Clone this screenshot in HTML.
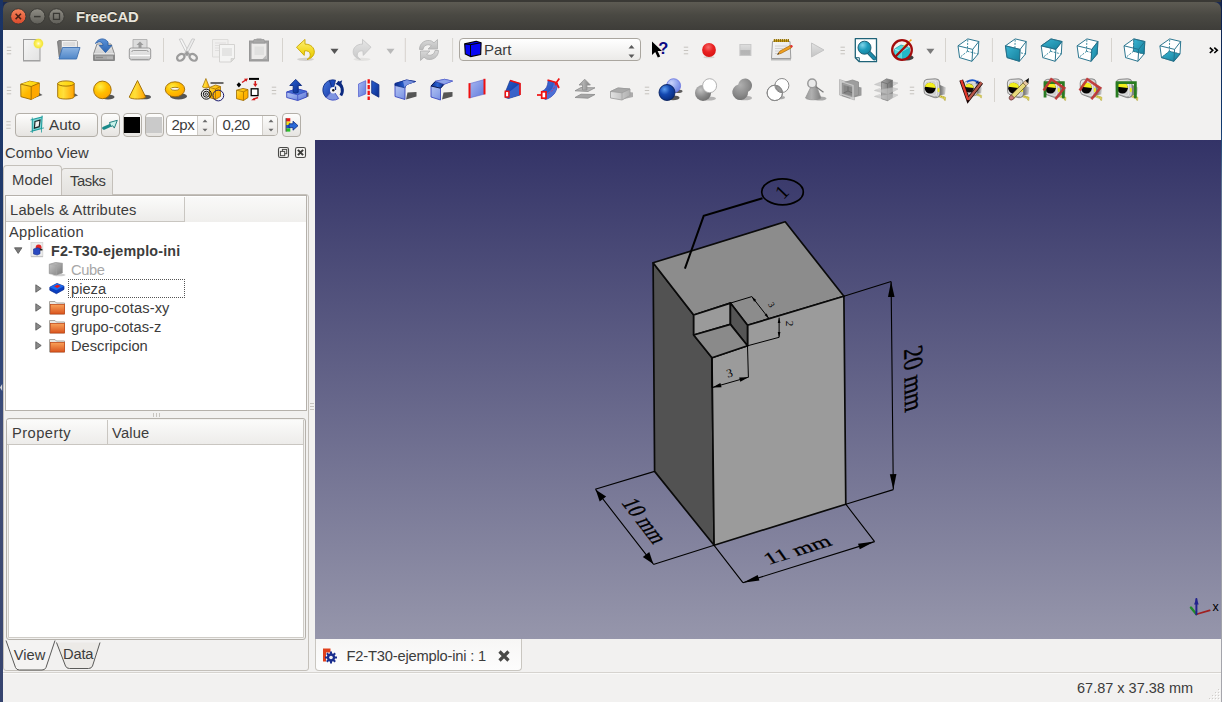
<!DOCTYPE html>
<html lang="en">
<head>
<meta charset="utf-8">
<title>FreeCAD</title>
<style>
html,body{margin:0;padding:0;}
body{width:1222px;height:702px;position:relative;overflow:hidden;background:#f2f1f0;
  font-family:"Liberation Sans","DejaVu Sans",sans-serif;font-size:14.7px;color:#3c3c3c;}
.abs{position:absolute;}
#deskL{left:0;top:0;width:3px;height:702px;background:linear-gradient(#1a3364 0%,#213b6c 30%,#34497a 55%,#444f76 62%,#36446f 100%);}
#deskR{left:1221px;top:0;width:1px;height:702px;background:linear-gradient(#0d1f4a 0%,#0f3a70 18%,#5a7090 26%,#8e96a4 45%,#a6a6ac 100%);}
#deskT{left:0;top:0;width:1222px;height:2px;background:#3a3935;}
#titlebar{left:3px;top:2px;width:1218px;height:28px;border-radius:7px 7px 0 0;
  background:linear-gradient(#5d5b53 0%,#4a4943 45%,#3e3d39 100%);}
#title{left:76px;top:8px;font-weight:bold;font-size:14.8px;color:#e9e5dc;text-shadow:0 -1px 0 rgba(0,0,0,.45);letter-spacing:-0.1px;white-space:nowrap;line-height:18px;}
.t{white-space:nowrap;line-height:18px;}
.frame{border:1px solid #b5b1ab;background:#fff;box-sizing:border-box;}
.hdr{background:linear-gradient(#fbfbfa,#edecea);border-right:1px solid #c9c6c1;border-bottom:1px solid #c9c6c1;box-sizing:border-box;}
.btn{border:1px solid #b3afa8;border-radius:4px;box-sizing:border-box;background:linear-gradient(#fdfdfc,#e6e4e1);}
</style>
</head>
<body>
<div class="abs" id="deskT"></div>
<div class="abs" id="deskL"></div>
<div class="abs" id="deskR"></div>
<svg class="abs" style="left:0;top:383px" width="3" height="9" viewBox="0 0 3 9"><path d="M0 4.500l2.200 -3.500v7z" fill="#d8d8d8"/></svg>
<div class="abs" style="left:3px;top:2px;width:1218px;height:10px;background:#1a2a52;"></div>
<div class="abs" id="titlebar"></div>
<svg class="abs" style="left:3px;top:2px" width="80" height="28" viewBox="0 0 80 28">
  <defs>
    <linearGradient id="gClose" x1="0" y1="0" x2="0" y2="1"><stop offset="0" stop-color="#f5855c"/><stop offset="1" stop-color="#d9482a"/></linearGradient>
    <linearGradient id="gBtn" x1="0" y1="0" x2="0" y2="1"><stop offset="0" stop-color="#8f8d85"/><stop offset="1" stop-color="#5f5e58"/></linearGradient>
  </defs>
  <circle cx="15.3" cy="14.4" r="7.7" fill="url(#gClose)" stroke="#3b3a36" stroke-width="1"/>
  <path d="M12.6 11.7l5.4 5.4M18 11.7l-5.4 5.4" stroke="#4a2216" stroke-width="1.5" fill="none"/>
  <circle cx="34.3" cy="14.4" r="7.7" fill="url(#gBtn)" stroke="#3b3a36" stroke-width="1"/>
  <path d="M31 14.6h6.6" stroke="#3a3935" stroke-width="1.5"/>
  <circle cx="53.5" cy="14.4" r="7.7" fill="url(#gBtn)" stroke="#3b3a36" stroke-width="1"/>
  <rect x="50.5" y="11.4" width="6" height="6" fill="none" stroke="#3a3935" stroke-width="1.3"/>
</svg>
<div class="abs t" id="title">FreeCAD</div>

<!-- TOOLBARS -->
<!--TB_START-->
<svg class="abs" style="left:0;top:30px" width="1222" height="110" viewBox="0 30 1222 110">
<defs><linearGradient id="gPaper" x1="0" y1="0" x2="1" y2="1"><stop offset="0" stop-color="#f6f6f6"/><stop offset="1" stop-color="#e2e2e2"/></linearGradient><radialGradient id="gGlow" cx=".5" cy=".5" r=".5"><stop offset="0" stop-color="#fffce0"/><stop offset=".35" stop-color="#fff36a"/><stop offset=".8" stop-color="#f4e63a"/><stop offset="1" stop-color="#f4e63a" stop-opacity=".3"/></radialGradient><linearGradient id="gFolderBlue" x1="0" y1="0" x2="0" y2="1"><stop offset="0" stop-color="#8db4e2"/><stop offset="1" stop-color="#4f86c8"/></linearGradient><linearGradient id="gDrive" x1="0" y1="0" x2="0" y2="1"><stop offset="0" stop-color="#e9e9e9"/><stop offset="1" stop-color="#bdbdbd"/></linearGradient><linearGradient id="gArrowBlue" x1="0" y1="0" x2="0" y2="1"><stop offset="0" stop-color="#5b92d8"/><stop offset="1" stop-color="#2f66b2"/></linearGradient><linearGradient id="gPrinter" x1="0" y1="0" x2="0" y2="1"><stop offset="0" stop-color="#ececec"/><stop offset="1" stop-color="#cfcfcf"/></linearGradient><linearGradient id="gUndo" x1="0" y1="0" x2="0" y2="1"><stop offset="0" stop-color="#fdf07a"/><stop offset="0.6" stop-color="#f2d820"/><stop offset="1" stop-color="#e2c400"/></linearGradient><linearGradient id="gRedo" x1="0" y1="0" x2="0" y2="1"><stop offset="0" stop-color="#e6e6e6"/><stop offset="1" stop-color="#c8c8c8"/></linearGradient><linearGradient id="gRefresh" x1="0" y1="0" x2="0" y2="1"><stop offset="0" stop-color="#d9d9d9"/><stop offset="1" stop-color="#bcbcbc"/></linearGradient><radialGradient id="gRed" cx="0.45" cy="0.3" r="0.7"><stop offset="0" stop-color="#f46a6a"/><stop offset="0.5" stop-color="#ea2222"/><stop offset="1" stop-color="#d81414"/></radialGradient><linearGradient id="gStop" x1="0" y1="0" x2="0" y2="1"><stop offset="0" stop-color="#dedede"/><stop offset="0.5" stop-color="#cfcfcf"/><stop offset="0.55" stop-color="#b4b4b4"/><stop offset="1" stop-color="#b8b8b8"/></linearGradient><linearGradient id="gPlay" x1="0" y1="0" x2="0" y2="1"><stop offset="0" stop-color="#e2e2e2"/><stop offset="1" stop-color="#c4c4c4"/></linearGradient><radialGradient id="gTealBall" cx="0.35" cy="0.3" r="0.8"><stop offset="0" stop-color="#7fd4ea"/><stop offset="0.5" stop-color="#1f9cbc"/><stop offset="1" stop-color="#15809c"/></radialGradient><linearGradient id="gTeal" x1="0" y1="0" x2="1" y2="1"><stop offset="0" stop-color="#3ab4d2"/><stop offset="1" stop-color="#15809c"/></linearGradient><linearGradient id="gYel" x1="0" y1="0" x2="1" y2="1"><stop offset="0" stop-color="#ffe14a"/><stop offset="0.5" stop-color="#ffb800"/><stop offset="1" stop-color="#ffa200"/></linearGradient><linearGradient id="gYelTop" x1="0" y1="0" x2="1" y2="0"><stop offset="0" stop-color="#ffe53a"/><stop offset="1" stop-color="#ffd000"/></linearGradient><linearGradient id="gYelH" x1="0" y1="0" x2="1" y2="0"><stop offset="0" stop-color="#ffd21a"/><stop offset="0.35" stop-color="#ffdf3a"/><stop offset="1" stop-color="#ffa000"/></linearGradient><radialGradient id="gYelBall" cx="0.38" cy="0.32" r="0.75"><stop offset="0" stop-color="#ffee44"/><stop offset="0.5" stop-color="#ffc000"/><stop offset="1" stop-color="#ffa200"/></radialGradient><linearGradient id="gBlueBox" x1="0" y1="0" x2="1" y2="1"><stop offset="0" stop-color="#c4d0f6"/><stop offset="0.5" stop-color="#90a6ea"/><stop offset="1" stop-color="#5570d4"/></linearGradient><linearGradient id="gBlueDark" x1="0" y1="0" x2="1" y2="1"><stop offset="0" stop-color="#2a62d0"/><stop offset="1" stop-color="#0a2a8c"/></linearGradient><linearGradient id="gBlueDarkH" x1="0" y1="0" x2="1" y2="0"><stop offset="0" stop-color="#0a2a8c"/><stop offset="0.5" stop-color="#2a62d0"/><stop offset="1" stop-color="#0a2a8c"/></linearGradient><linearGradient id="gBlueMid" x1="0" y1="0" x2="1" y2="1"><stop offset="0" stop-color="#4a7ae0"/><stop offset="1" stop-color="#1438a4"/></linearGradient><linearGradient id="gBlueLight" x1="0" y1="0" x2="1" y2="1"><stop offset="0" stop-color="#a9b8f0"/><stop offset="1" stop-color="#5f7add"/></linearGradient><linearGradient id="gGrayH" x1="0" y1="0" x2="1" y2="0"><stop offset="0" stop-color="#9c9c9c"/><stop offset="0.4" stop-color="#b0b0b0"/><stop offset="1" stop-color="#7e7e7e"/></linearGradient><linearGradient id="gGrayBox" x1="0" y1="0" x2="1" y2="0"><stop offset="0" stop-color="#e2e2e2"/><stop offset="1" stop-color="#b0b0b0"/></linearGradient><linearGradient id="gGrayBox2" x1="0" y1="0" x2="1" y2="0"><stop offset="0" stop-color="#a9a9a9"/><stop offset="1" stop-color="#6e6e6e"/></linearGradient><radialGradient id="gBallLB" cx="0.35" cy="0.3" r="0.75"><stop offset="0" stop-color="#c9d4fa"/><stop offset="0.6" stop-color="#8ea2ee"/><stop offset="1" stop-color="#6f86e4"/></radialGradient><radialGradient id="gBallDB" cx="0.35" cy="0.3" r="0.75"><stop offset="0" stop-color="#5b9cf0"/><stop offset="0.45" stop-color="#1448b0"/><stop offset="1" stop-color="#062a7c"/></radialGradient><radialGradient id="gBallG" cx="0.35" cy="0.3" r="0.75"><stop offset="0" stop-color="#c4c4c4"/><stop offset="0.6" stop-color="#8a8a8a"/><stop offset="1" stop-color="#6e6e6e"/></radialGradient><radialGradient id="gBallG2" cx="0.4" cy="0.3" r="0.8"><stop offset="0" stop-color="#b0b0b0"/><stop offset="0.6" stop-color="#8a8a8a"/><stop offset="1" stop-color="#6a6a6a"/></radialGradient><linearGradient id="gTape" x1="0" y1="0" x2="1" y2="1"><stop offset="0" stop-color="#ececec"/><stop offset="0.5" stop-color="#c8c8c8"/><stop offset="1" stop-color="#a4a4a4"/></linearGradient><linearGradient id="gTapeSh" x1="0" y1="0" x2="1" y2="0"><stop offset="0" stop-color="#4a4a4a"/><stop offset="0.6" stop-color="#9a9a9a"/><stop offset="1" stop-color="#dcdcdc"/></linearGradient><linearGradient id="gBtn2" x1="0" y1="0" x2="0" y2="1"><stop offset="0" stop-color="#fdfdfc"/><stop offset="1" stop-color="#e4e2df"/></linearGradient></defs>
<path d="M6.8 47.2h4.400M6.8 50.5h4.400M6.8 53.8h4.400" stroke="#c6c3be" stroke-width="1"/>
<path d="M683.8 47.2h4.400M683.8 50.5h4.400M683.8 53.8h4.400" stroke="#c6c3be" stroke-width="1"/>
<path d="M840.5 47.2h4.400M840.5 50.5h4.400M840.5 53.8h4.400" stroke="#c6c3be" stroke-width="1"/>
<path d="M163.5 38.0v24" stroke="#d6d3ce" stroke-width="1"/>
<path d="M282.5 38.0v24" stroke="#d6d3ce" stroke-width="1"/>
<path d="M405.3 38.0v24" stroke="#d6d3ce" stroke-width="1"/>
<path d="M452.6 38.0v24" stroke="#d6d3ce" stroke-width="1"/>
<path d="M945.5 38.0v24" stroke="#d6d3ce" stroke-width="1"/>
<path d="M992.4 38.0v24" stroke="#d6d3ce" stroke-width="1"/>
<path d="M1111.5 38.0v24" stroke="#d6d3ce" stroke-width="1"/>
<path d="M330.5 48.7h8l-4 5.200z" fill="#555"/>
<path d="M386.5 48.7h8l-4 5.200z" fill="#b9b9b9"/>
<path d="M926.4 48.7h8l-4 5.200z" fill="#7a7a7a"/>
<g transform="translate(20.0,38.0)"><rect x="3.5" y="1.500" width="16.500" height="21" fill="url(#gPaper)" stroke="#9b9b9b" stroke-width="1"/><path d="M3 23.300h17.500" stroke="#bdbdbd" stroke-width="1"/><circle cx="18.400" cy="5.500" r="5.200" fill="url(#gGlow)"/></g>
<g transform="translate(56.0,38.0)"><path d="M1.500 3.500l1.500 -1h5l1.200 1.500h10v15h-16z" fill="#8d8d8d" stroke="#6e6e6e" stroke-width=".8"/><path d="M5.500 2.500h15l1 1v10h-16z" fill="url(#gPaper)" stroke="#9a9a9a" stroke-width=".8"/><path d="M7 5h12M7 7h12" stroke="#c4c4c4" stroke-width=".8"/><path d="M6.500 9.500h17.500l-3.500 11.500h-17.500z" fill="url(#gFolderBlue)" stroke="#3d6fb0" stroke-width=".9"/></g>
<g transform="translate(92.0,38.0)"><path d="M1.500 16l3.500 -10h14l3.500 10v6.500h-21z" fill="url(#gDrive)" stroke="#8a8a8a" stroke-width="1"/><path d="M1.500 16h21" stroke="#f7f7f7" stroke-width="1"/><rect x="2.500" y="17" width="19" height="5" fill="#a9a9a9" stroke="#7e7e7e" stroke-width=".8"/><path d="M4 19.500h7" stroke="#8a8a8a" stroke-width="1.200"/><path d="M16 18.500v2.500M18 18.500v2.500M20 18.500v2.500" stroke="#c4c4c4" stroke-width=".8"/><path d="M3.500 5.500c2 -5 9 -6.500 12.500 -1.500l0 3.500h3.800l-6.300 7l-6.300 -7h3.800c0 -3.500 -4 -5 -7.500 -2z" fill="url(#gArrowBlue)" stroke="#2f62a8" stroke-width=".9"/></g>
<g transform="translate(128.0,38.0)"><path d="M5 1.500h14v9.500h-14z" fill="#dcdcdc" stroke="#b0b0b0" stroke-width=".9"/><path d="M12 3.500l3.500 3.500h-2v3h-3v-3h-2z" fill="#9a9a9a"/><path d="M1.300 12q0 -2 2 -2h17.400q2 0 2 2v7.500q0 2 -2 2h-17.400q-2 0 -2 -2z" fill="url(#gPrinter)" stroke="#9a9a9a" stroke-width="1"/><path d="M3.800 14q0 -1.500 1.500 -1.500h13.400q1.500 0 1.500 1.500" fill="none" stroke="#9f9f9f" stroke-width="1"/><path d="M2 17.500h20" stroke="#fbfbfb" stroke-width="1.300"/><path d="M2.500 22.400h19" stroke="#c9c9c9" stroke-width="1"/></g>
<g transform="translate(175.0,38.0)"><path d="M4.300 1.200l2.600 -.3l8.300 16l-2.300 1.300z" fill="#f6f6f6" stroke="#c2c2c2" stroke-width=".8"/><path d="M19.700 1.200l-2.600 -.3l-8.300 16l2.300 1.300z" fill="#ececec" stroke="#c2c2c2" stroke-width=".8"/><ellipse cx="5.800" cy="19.300" rx="4" ry="3" transform="rotate(-35 5.800 19.300)" fill="none" stroke="#9c9c9c" stroke-width="2.300"/><ellipse cx="18.200" cy="19.300" rx="4" ry="3" transform="rotate(35 18.200 19.300)" fill="none" stroke="#9c9c9c" stroke-width="2.300"/><path d="M9.500 16l2.500 -3.500l2.500 3.500l-2.500 2z" fill="#9c9c9c"/></g>
<g transform="translate(211.0,38.0)"><path d="M1.500 1.500h15.500v17.500h-15.500z" fill="#f0efee" stroke="#dddcda" stroke-width="1"/><path d="M4 5h11M4 7.500h11M4 10h11M4 12.500h11" stroke="#dedddb" stroke-width=".9"/><path d="M8.500 6.500h15v14l-3.500 3.500h-11.500z" fill="#f4f4f3" stroke="#d4d3d1" stroke-width="1"/><rect x="11" y="10" width="10" height="8" fill="#e4e4e3"/><path d="M23.500 20.500h-3.500v3.500z" fill="#dcdbd9" stroke="#cfcecc" stroke-width=".7"/></g>
<g transform="translate(247.0,38.0)"><rect x="2.500" y="3" width="19" height="20" fill="#a2a2a2" stroke="#979797" stroke-width="1"/><path d="M4.500 5.500h15v15.500h-15z" fill="#ecebea"/><path d="M7 1.500h10l1 3.500h-12z" fill="#a8a8a8" stroke="#9a9a9a" stroke-width=".8"/><rect x="9.500" y="0.500" width="5" height="2" fill="#a0a0a0"/><path d="M7.500 8.500h9.500v8.500h-9.500z" fill="#e0e0df"/><path d="M19.500 17v4h-4z" fill="#b9b9b9"/></g>
<g transform="translate(293.0,38.0)"><ellipse cx="12.500" cy="21.300" rx="8.500" ry="1.600" fill="#b9b7b2" opacity=".55"/><path d="M3.500 9.200l8.500 -7.800l0 4.700c6 0 9.600 3.800 9.300 8.300c-.3 3.500 -3.300 6.200 -7.300 7.100c2.600 -1.700 3.600 -3.600 3.200 -5.600c-.5 -2.300 -2.700 -3.300 -5.600 -3.100l-.4 4.600z" fill="url(#gUndo)" stroke="#c9a600" stroke-width=".9" stroke-linejoin="round"/></g>
<g transform="translate(350.5,38.0)"><ellipse cx="11.500" cy="21.300" rx="8.500" ry="1.600" fill="#d9d8d5" opacity=".6"/><path d="M20.500 9.200l-8.500 -7.800l0 4.700c-6 0 -9.600 3.800 -9.300 8.300c.3 3.500 3.300 6.200 7.300 7.100c-2.600 -1.700 -3.600 -3.600 -3.200 -5.600c.5 -2.300 2.700 -3.300 5.600 -3.100l.4 4.600z" fill="url(#gRedo)" stroke="#c6c6c6" stroke-width=".9" stroke-linejoin="round"/></g>
<g transform="translate(417.0,38.0)"><path d="M2.500 11.500c0 -6.500 6 -10.500 12 -8.500l2.500 1.800l3.500 -3.300l0 9.500l-9.500 0l3.500 -3.300c-3.500 -2.200 -8 -.5 -8.500 3.800z" fill="url(#gRefresh)" stroke="#b4b4b4" stroke-width=".9" stroke-linejoin="round"/><path d="M21.500 12.500c0 6.500 -6 10.500 -12 8.500l-2.500 -1.800l-3.500 3.300l0 -9.500l9.500 0l-3.500 3.300c3.500 2.200 8 .5 8.500 -3.800z" fill="url(#gRefresh)" stroke="#b4b4b4" stroke-width=".9" stroke-linejoin="round"/></g>
<g transform="translate(648.0,38.0)"><path d="M4 3.500l0 13.500l3.200 -3l2.600 5.600l2.400 -1.100l-2.600 -5.400l4.400 -.2z" fill="#000"/><text x="10.300" y="16.300" font-family="'Liberation Sans',sans-serif" font-weight="bold" font-size="16.500" fill="#0b0b86">?</text></g>
<g transform="translate(697.0,38.0)"><ellipse cx="12" cy="19.200" rx="5.500" ry="1" fill="#c9c6c1" opacity=".7"/><circle cx="12" cy="12" r="6.900" fill="url(#gRed)"/></g>
<g transform="translate(733.4,38.0)"><rect x="6.500" y="6.500" width="11" height="11" fill="url(#gStop)" stroke="#c9c9c9" stroke-width="1"/></g>
<g transform="translate(769.0,38.0)"><path d="M2 21.500h20" stroke="#bcbcbc" stroke-width="2"/><path d="M3.500 3.500h17.500l.8 17h-19.300z" fill="url(#gPaper)" stroke="#9d9d9d" stroke-width="1"/><path d="M6 8h12M6 10.500h8M6 13h9M6 15.500h6" stroke="#cdcdcd" stroke-width=".9"/><path d="M4.500 1.500h15.500v2.500h-15.500z" fill="#c49a1a"/><path d="M5.500 1v3M7.500 1v3M9.500 1v3M11.500 1v3M13.500 1v3M15.500 1v3M17.500 1v3M19.500 1v3" stroke="#8a6a08" stroke-width=".9"/><path d="M8.500 16.500l3.800 -1.200l10 -5.400l-1.300 -2.300l-10 5.400z" fill="#f0a020" stroke="#a86a10" stroke-width=".7"/><path d="M21 7.600l1.300 2.300l1.200 -.8q.5 -.4 .2 -1l-.6 -.9q-.4 -.5 -1 -.2z" fill="#e03030"/><path d="M8.500 16.500l1.600 -.5l-.8 -1.500z" fill="#333"/></g>
<g transform="translate(805.0,38.0)"><path d="M6.500 5l12.500 7l-12.500 7z" fill="url(#gPlay)" stroke="#c4c4c4" stroke-width="1" stroke-linejoin="round"/></g>
<g transform="translate(853.8,38.0)"><path d="M1.500 .700h21.200v23h-17.200l-4 -4z" fill="#fff" stroke="#1f6378" stroke-width="1.300" stroke-linejoin="round"/><path d="M1.500 19.700h4v4" fill="none" stroke="#1f6378" stroke-width="1"/><path d="M14 13.500l6.500 6.800" stroke="#1f6378" stroke-width="4.200" stroke-linecap="round"/><path d="M14 13.500l6.500 6.800" stroke="#1c8aa9" stroke-width="2.600" stroke-linecap="round"/><circle cx="10.700" cy="9.700" r="6.500" fill="url(#gTealBall)" stroke="#1f6378" stroke-width="1"/></g>
<g transform="translate(890.0,38.0)"><ellipse cx="17" cy="19.500" rx="6.500" ry="3" fill="#222" opacity=".85"/><path d="M4.500 11l6.500 -4l8.500 2.500v9l-8 4l-7 -4z" fill="#4fd8de" stroke="#1d98a8" stroke-width=".7"/><path d="M4.500 11l7 3l8 -4.500M11.500 14v8.500" fill="none" stroke="#bff4f6" stroke-width=".8"/><path d="M11.500 14l8 -4.500v9l-8 4z" fill="#22b8c8"/><path d="M13 9.500l7.500 -7" stroke="#f0d020" stroke-width="1.500"/><circle cx="20.800" cy="2.200" r=".9" fill="#f39a1a"/><circle cx="12" cy="12" r="9.800" fill="none" stroke="#a30c0c" stroke-width="2.300"/><path d="M5 19l14 -14" stroke="#a30c0c" stroke-width="2.300"/></g>
<g transform="translate(956.5,38.0)"><polygon points="1.5,7.8 11.3,0.9 22.3,3.5 21.6,16.0 15.5,23.3 3.1,19.6" fill="#fff"/><path d="M10.9 13.3L11.3 0.9M10.9 13.3L21.6 16.0M10.9 13.3L3.1 19.6" fill="none" stroke="#2b7f95" stroke-width=".9" stroke-dasharray="2 1.2"/><polygon points="1.5,7.8 11.3,0.9 22.3,3.5 21.6,16.0 15.5,23.3 3.1,19.6" fill="none" stroke="#22708a" stroke-width=".950" stroke-linejoin="round"/><path d="M1.5 7.8L16.2 11.4L15.5 23.3M16.2 11.4L22.3 3.5" fill="none" stroke="#22708a" stroke-width=".950" stroke-linejoin="round"/></g>
<g transform="translate(1003.9,38.0)"><polygon points="1.5,7.8 11.3,0.9 22.3,3.5 21.6,16.0 15.5,23.3 3.1,19.6" fill="#fff"/><path d="M10.9 13.3L11.3 0.9M10.9 13.3L21.6 16.0M10.9 13.3L3.1 19.6" fill="none" stroke="#2b7f95" stroke-width=".9" stroke-dasharray="2 1.2"/><polygon points="1.5,7.8 16.2,11.4 15.5,23.3 3.1,19.6" fill="url(#gTeal)" stroke="#1f6378" stroke-width=".6"/><polygon points="1.5,7.8 11.3,0.9 22.3,3.5 21.6,16.0 15.5,23.3 3.1,19.6" fill="none" stroke="#22708a" stroke-width=".950" stroke-linejoin="round"/><path d="M1.5 7.8L16.2 11.4L15.5 23.3M16.2 11.4L22.3 3.5" fill="none" stroke="#22708a" stroke-width=".950" stroke-linejoin="round"/></g>
<g transform="translate(1039.7,38.0)"><polygon points="1.5,7.8 11.3,0.9 22.3,3.5 21.6,16.0 15.5,23.3 3.1,19.6" fill="#fff"/><path d="M10.9 13.3L11.3 0.9M10.9 13.3L21.6 16.0M10.9 13.3L3.1 19.6" fill="none" stroke="#2b7f95" stroke-width=".9" stroke-dasharray="2 1.2"/><polygon points="1.5,7.8 11.3,0.9 22.3,3.5 16.2,11.4" fill="url(#gTeal)" stroke="#1f6378" stroke-width=".6"/><polygon points="1.5,7.8 11.3,0.9 22.3,3.5 21.6,16.0 15.5,23.3 3.1,19.6" fill="none" stroke="#22708a" stroke-width=".950" stroke-linejoin="round"/><path d="M1.5 7.8L16.2 11.4L15.5 23.3M16.2 11.4L22.3 3.5" fill="none" stroke="#22708a" stroke-width=".950" stroke-linejoin="round"/></g>
<g transform="translate(1075.6,38.0)"><polygon points="1.5,7.8 11.3,0.9 22.3,3.5 21.6,16.0 15.5,23.3 3.1,19.6" fill="#fff"/><path d="M10.9 13.3L11.3 0.9M10.9 13.3L21.6 16.0M10.9 13.3L3.1 19.6" fill="none" stroke="#2b7f95" stroke-width=".9" stroke-dasharray="2 1.2"/><polygon points="16.2,11.4 22.3,3.5 21.6,16.0 15.5,23.3" fill="url(#gTeal)" stroke="#1f6378" stroke-width=".6"/><polygon points="1.5,7.8 11.3,0.9 22.3,3.5 21.6,16.0 15.5,23.3 3.1,19.6" fill="none" stroke="#22708a" stroke-width=".950" stroke-linejoin="round"/><path d="M1.5 7.8L16.2 11.4L15.5 23.3M16.2 11.4L22.3 3.5" fill="none" stroke="#22708a" stroke-width=".950" stroke-linejoin="round"/></g>
<g transform="translate(1122.5,38.0)"><polygon points="1.5,7.8 11.3,0.9 22.3,3.5 21.6,16.0 15.5,23.3 3.1,19.6" fill="#fff"/><path d="M10.9 13.3L11.3 0.9M10.9 13.3L21.6 16.0M10.9 13.3L3.1 19.6" fill="none" stroke="#2b7f95" stroke-width=".9" stroke-dasharray="2 1.2"/><polygon points="11.3,0.9 22.3,3.5 21.6,16.0 10.9,13.3" fill="url(#gTeal)" stroke="#1f6378" stroke-width=".6"/><polygon points="1.5,7.8 11.3,0.9 22.3,3.5 21.6,16.0 15.5,23.3 3.1,19.6" fill="none" stroke="#22708a" stroke-width=".950" stroke-linejoin="round"/><path d="M1.5 7.8L16.2 11.4L15.5 23.3M16.2 11.4L22.3 3.5" fill="none" stroke="#22708a" stroke-width=".950" stroke-linejoin="round"/></g>
<g transform="translate(1158.4,38.0)"><polygon points="1.5,7.8 11.3,0.9 22.3,3.5 21.6,16.0 15.5,23.3 3.1,19.6" fill="#fff"/><path d="M10.9 13.3L11.3 0.9M10.9 13.3L21.6 16.0M10.9 13.3L3.1 19.6" fill="none" stroke="#2b7f95" stroke-width=".9" stroke-dasharray="2 1.2"/><polygon points="3.1,19.6 15.5,23.3 21.6,16.0 10.9,13.3" fill="url(#gTeal)" stroke="#1f6378" stroke-width=".6"/><polygon points="1.5,7.8 11.3,0.9 22.3,3.5 21.6,16.0 15.5,23.3 3.1,19.6" fill="none" stroke="#22708a" stroke-width=".950" stroke-linejoin="round"/><path d="M1.5 7.8L16.2 11.4L15.5 23.3M16.2 11.4L22.3 3.5" fill="none" stroke="#22708a" stroke-width=".950" stroke-linejoin="round"/></g>
<path d="M6.8 87.2h4.400M6.8 90.5h4.400M6.8 93.8h4.400" stroke="#c6c3be" stroke-width="1"/>
<path d="M271.8 87.2h4.400M271.8 90.5h4.400M271.8 93.8h4.400" stroke="#c6c3be" stroke-width="1"/>
<path d="M644.8 87.2h4.400M644.8 90.5h4.400M644.8 93.8h4.400" stroke="#c6c3be" stroke-width="1"/>
<path d="M909.8 87.2h4.400M909.8 90.5h4.400M909.8 93.8h4.400" stroke="#c6c3be" stroke-width="1"/>
<path d="M994.5 78.0v24" stroke="#d6d3ce" stroke-width="1"/>
<g transform="translate(18.0,78.0)"><path d="M12 21.500l12.500 -4.500l-4 -2.500l-8 3z" fill="#3a3a3a" opacity=".8"/><path d="M2.700 6.200l9 -3l9.600 1.800l-0.300 12.300l-7.800 4.200l-10.300 -2.800z" fill="url(#gYel)" stroke="#9c6a00" stroke-width=".9" stroke-linejoin="round"/><path d="M2.700 6.200l10.500 2.300l8.100 -3.500l-9.600 -1.800z" fill="url(#gYelTop)"/><path d="M13.200 8.500l8.100 -3.500l-0.300 12.300l-7.800 4.200z" fill="#ffa800"/><path d="M2.700 6.200l10.500 2.300l8.100 -3.500M13.200 8.500v13" fill="none" stroke="#9c6a00" stroke-width=".9" stroke-linejoin="round"/></g>
<g transform="translate(54.0,78.0)"><path d="M14 21l10 -3.500l-3 -2l-7 2z" fill="#3a3a3a" opacity=".8"/><path d="M3.700 5.500v13.300c0 3 16.500 3 16.500 0v-13.300z" fill="url(#gYelH)" stroke="#9c6a00" stroke-width=".9"/><ellipse cx="11.950" cy="5.500" rx="8.250" ry="2.600" fill="url(#gYelTop)" stroke="#9c6a00" stroke-width=".9"/></g>
<g transform="translate(90.0,78.0)"><ellipse cx="18" cy="19" rx="6.500" ry="2.500" fill="#3a3a3a" opacity=".85"/><circle cx="12.400" cy="11.900" r="8.800" fill="url(#gYelBall)" stroke="#9c6a00" stroke-width=".9"/></g>
<g transform="translate(126.0,78.0)"><ellipse cx="18.500" cy="19" rx="6.500" ry="2.300" fill="#3a3a3a" opacity=".85"/><path d="M11.500 2.500l-8.300 16.600c1.500 2.600 15 2.600 16.500 0z" fill="url(#gYelH)" stroke="#9c6a00" stroke-width=".9" stroke-linejoin="round"/></g>
<g transform="translate(163.0,78.0)"><ellipse cx="15.500" cy="18.200" rx="8.500" ry="3.200" fill="#3a3a3a" opacity=".85"/><ellipse cx="12" cy="11.300" rx="9.700" ry="7.500" fill="url(#gYelBall)" stroke="#9c6a00" stroke-width=".9"/><ellipse cx="12" cy="10.800" rx="4.300" ry="1.500" fill="#fbfbf5" stroke="#9c6a00" stroke-width=".8"/></g>
<g transform="translate(200.5,78.0)"><path d="M9 9.500l6 -2.500l5 1.500v10l-5 3l-6 -2z" fill="url(#gYel)" stroke="#9c6a00" stroke-width=".8"/><path d="M9 9.500l6 1.500l5 -2.500M15 11v10" fill="none" stroke="#9c6a00" stroke-width=".7"/><path d="M5.400 .500l-3.400 8.500c.8 1.200 6 1.200 6.800 0z" fill="url(#gYelH)" stroke="#9c6a00" stroke-width=".7"/><path d="M10 5h13" stroke="#111" stroke-width="1.200"/><circle cx="5.800" cy="16.200" r="5" fill="none" stroke="#111" stroke-width="1"/><circle cx="5.800" cy="16.200" r="3" fill="none" stroke="#111" stroke-width="1"/><circle cx="5.800" cy="16.200" r="1.200" fill="none" stroke="#111" stroke-width=".9"/><circle cx="17.800" cy="17.500" r="5.400" fill="none" stroke="#1a1a6e" stroke-width="1"/></g>
<g transform="translate(235.5,78.0)"><path d="M1 12.200l6.500 -1.800l5 1.200v8l-4.500 2.900l-7 -1.800z" fill="url(#gYel)" stroke="#9c6a00" stroke-width=".8"/><path d="M1 12.200l7 1.600l4.500 -2.200M8 13.800v8.700" fill="none" stroke="#9c6a00" stroke-width=".7"/><path d="M3.400 4.200l2.300 2.600l-2.300 2.600l-2.300 -2.600z" fill="#000"/><path d="M6.500 4.500l4.500 -3" stroke="#d41a1a" stroke-width="1.500"/><path d="M12.500 .500l-4 .3l2.300 3z" fill="#d41a1a"/><path d="M13.500 .900h10" stroke="#000" stroke-width="2"/><path d="M19.800 3v4" stroke="#d41a1a" stroke-width="1.500"/><path d="M19.800 9l-2.200 -3.200h4.400z" fill="#d41a1a"/><rect x="15.700" y="10.800" width="6.800" height="6.800" fill="#fff" stroke="#000" stroke-width="1.300"/><path d="M22.500 19.500l-4.500 1.700" stroke="#d41a1a" stroke-width="1.500"/><path d="M15.500 22.300l3.500 -2.600l.8 2.600z" fill="#d41a1a"/></g>
<g transform="translate(285.0,78.0)"><path d="M14 21.500l9.500 -3v-4l-9 2z" fill="#3a3a3a" opacity=".8"/><path d="M1.700 14l10.300 -3.200l9.700 2.600v5.600l-9 3.500l-11 -3z" fill="url(#gBlueBox)" stroke="#3a48c0" stroke-width=".9" stroke-linejoin="round"/><path d="M1.700 14l11 2.800l9 -3.400l-9.700 -2.600z" fill="#3f6ad0" stroke="#3a48c0" stroke-width=".7"/><path d="M12.700 16.800v5.700" stroke="#3a48c0" stroke-width=".7"/><path d="M8.200 14.300v-6.800h-3.400l5.900 -6.100l5.900 6.100h-3.400v6.800l-2.500 .8z" fill="url(#gBlueDark)" stroke="#0c2a80" stroke-width=".9" stroke-linejoin="round"/></g>
<g transform="translate(321.0,78.0)"><path d="M12 12l-3.500 -9.600a10.200 10.200 0 0 0 -3.300 17.100z" fill="url(#gBlueMid)" stroke="#0c2a80" stroke-width=".9" stroke-linejoin="round"/><path d="M12 12l-6.800 7.500a10.200 10.200 0 0 0 12.500 1z" fill="#7f95e0" stroke="#3a48c0" stroke-width=".8" stroke-linejoin="round"/><path d="M12 12l-3.500 -9.600a10.200 10.200 0 0 1 6 -.2z" fill="#1a48b8" stroke="#0c2a80" stroke-width=".8"/><path d="M16.500 4a9.500 9.500 0 0 1 3.300 13.500" fill="none" stroke="#0c2a80" stroke-width="3"/><path d="M14.200 5.800l7 -3.500l-1.800 6.500z" fill="#0c2a80"/><circle cx="12.300" cy="12.300" r="3.300" fill="#f4f4f6"/><circle cx="12.300" cy="12.300" r="1.200" fill="#111"/><path d="M14.500 8.500v3.500" stroke="#0c2a80" stroke-width="1.300"/></g>
<g transform="translate(357.0,78.0)"><path d="M1.500 6l7.200 -3.300v13.200l-7.200 2.900z" fill="url(#gBlueLight)" stroke="#5a66d0" stroke-width=".8"/><path d="M14.700 2.700l7.200 4v12.500l-7.200 -4z" fill="url(#gBlueDark)" stroke="#0c2a80" stroke-width=".8"/><path d="M11.700 1.200v20.700" stroke="#f01010" stroke-width="2.300" stroke-dasharray="4.300 1.500"/></g>
<g transform="translate(393.0,78.0)"><path d="M13 21.500l10.500 -3v-4.500l-9 .5z" fill="#3a3a3a" opacity=".85"/><path d="M2 5.500l11.500 -3.500l9 1.500l-8 2.700q-2.500 1 -2.500 3.600v11.700l-10 -3z" fill="url(#gBlueBox)" stroke="#3a48c0" stroke-width=".9" stroke-linejoin="round"/><path d="M2 5.500l11.500 -3.500l9 1.500l-8 2.700q-2.500 1 -2.500 3.600l-10 -2.300z" fill="url(#gBlueDarkH)" stroke="#0c2a80" stroke-width=".7"/><path d="M14 2l-4 1.200l1.800 7.300q.2 -3 2.700 -4l7.500 -2.500z" fill="#8fa4ea" opacity=".8"/></g>
<g transform="translate(429.0,78.0)"><path d="M13 21.500l10.500 -3v-4.500l-9 .5z" fill="#3a3a3a" opacity=".85"/><path d="M2 8l4.500 -4.700l9 -2l8 1.800l-8.500 3.100l-3.500 4v11.800l-9.500 -3z" fill="url(#gBlueBox)" stroke="#3a48c0" stroke-width=".9" stroke-linejoin="round"/><path d="M2 8l4.500 -4.700l8.500 2.900l-3.500 4z" fill="url(#gBlueDarkH)" stroke="#0c1a50" stroke-width="1"/><path d="M6.500 3.300l9 -2l8 1.800l-8.500 3.100z" fill="#8fa4ea" stroke="#5a66d0" stroke-width=".6"/></g>
<g transform="translate(465.0,78.0)"><path d="M4.500 5.700l15 -4.200v14.600l-15 3.800z" fill="url(#gBlueLight)" stroke="#5a66d0" stroke-width=".6"/><path d="M4.500 5.200v15" stroke="#f01010" stroke-width="2"/><path d="M19.500 .800v15.600" stroke="#f01010" stroke-width="2"/></g>
<g transform="translate(501.0,78.0)"><path d="M9 2.500l10 3v11.500l-11.500 3.500l-3.300 -1v-5z" fill="url(#gBlueDark)" stroke="#0c2a80" stroke-width=".6"/><path d="M19 5.500l-11.500 9v6l11.500 -3.500z" fill="#3f6ad0" opacity=".85"/><path d="M9 2.500l10 3v11.500" fill="none" stroke="#f01010" stroke-width="1.600"/><rect x="4.300" y="13.300" width="3.600" height="5.700" fill="#fff" stroke="#f01010" stroke-width="1.500"/></g>
<g transform="translate(537.0,78.0)"><path d="M11 2.500l9.500 2.500c0 9 -5 14.500 -12 16.500l-4 -2.500v-5.500c4 -1.500 6.500 -5 6.500 -11z" fill="url(#gBlueMid)" stroke="#2a3aa8" stroke-width=".7"/><path d="M20.500 5c0 9 -5 14.500 -12 16.500v-6c5 -1.500 8 -5.500 8.500 -11.500z" fill="#5577dd" opacity=".8"/><path d="M8 17c5 -1.500 9 -5.500 10.500 -10" fill="none" stroke="#c02a6a" stroke-width=".9" stroke-dasharray="2 1.500"/><path d="M10.500 2l9.500 2.800M18 6.500l4.300 -6M19.500 5l2.500 5" fill="none" stroke="#f01010" stroke-width="1.700"/><rect x="4.700" y="13.800" width="4.300" height="6.400" fill="#fff" stroke="#f01010" stroke-width="1.700"/><path d="M0 17h5" stroke="#f01010" stroke-width="1.700"/></g>
<g transform="translate(573.0,78.0)"><path d="M2 19.500l6 -3.300l14 .3l-7 3.700z" fill="#a5a5a5" stroke="#8a8a8a" stroke-width=".8"/><path d="M2 12.800l6 -3.300l14 .3l-7 3.700z" fill="#b4b4b4" stroke="#8a8a8a" stroke-width=".8"/><path d="M9.500 12v-5h-3.500l5.700 -5.800l5.700 5.800h-3.500v5z" fill="url(#gGrayH)" stroke="#8f8f8f" stroke-width=".8"/></g>
<g transform="translate(609.0,78.0)"><path d="M13 21.500l11 -2.500v-4.500l-4 -.5z" fill="#9a9a9a" opacity=".8"/><path d="M1.500 13.500l7.500 -3.500l12 1v6.500l-8 4.500l-11.500 -2z" fill="url(#gGrayBox)" stroke="#a2a2a2" stroke-width=".9" stroke-linejoin="round"/><path d="M1.500 13.500l7.500 -3.500l12 1l-8 3.800z" fill="#a9a9a9" stroke="#9a9a9a" stroke-width=".7"/><path d="M13 14.800v7" stroke="#9f9f9f" stroke-width=".7"/></g>
<g transform="translate(658.0,78.0)"><ellipse cx="20" cy="13.300" rx="4.500" ry="1.800" fill="#3a3a3a" opacity=".8"/><circle cx="15.600" cy="7.700" r="7" fill="url(#gBallLB)" stroke="#6a72e0" stroke-width=".8"/><ellipse cx="15" cy="19.800" rx="6.500" ry="2.400" fill="#3a3a3a" opacity=".85"/><circle cx="9" cy="14.500" r="8" fill="url(#gBallDB)" stroke="#08205c" stroke-width=".9"/></g>
<g transform="translate(694.0,78.0)"><ellipse cx="14.500" cy="20.500" rx="7.500" ry="2" fill="#8a8a8a" opacity=".6"/><circle cx="9" cy="14.900" r="8" fill="url(#gBallG)"/><circle cx="15.600" cy="7.700" r="7" fill="#fff" stroke="#aaa" stroke-width=".9"/></g>
<g transform="translate(730.0,78.0)"><ellipse cx="14.500" cy="20" rx="7.500" ry="2.300" fill="#8a8a8a" opacity=".6"/><path d="M8.300 6.500a6.900 6.900 0 1 1 9.800 7.200a7.900 7.900 0 1 1 -9.800 -7.200z" fill="url(#gBallG2)"/></g>
<g transform="translate(766.0,78.0)"><ellipse cx="13.500" cy="19.500" rx="5.500" ry="1.800" fill="#8a8a8a" opacity=".7"/><circle cx="8.800" cy="14.900" r="7.700" fill="#fff" stroke="#8a8a8a" stroke-width="1"/><circle cx="15.900" cy="7.500" r="7" fill="#fff" stroke="#8a8a8a" stroke-width="1"/><path d="M9.700 7.300a7.700 7.700 0 0 1 6.700 7.200a7 7 0 0 1 -6.700 -7.200z" fill="#9a9a9a" stroke="#7a7a7a" stroke-width=".8"/><circle cx="8.800" cy="14.900" r="7.700" fill="none" stroke="#8a8a8a" stroke-width="1"/></g>
<g transform="translate(802.0,78.0)"><ellipse cx="18" cy="20.500" rx="6.500" ry="2" fill="#8a8a8a" opacity=".7"/><path d="M10.500 5.500l-7 14.500c1.500 2.400 14 2.400 15.500 0l-5.500 -14.500z" fill="url(#gGrayH)" stroke="#8f8f8f" stroke-width=".7"/><path d="M13.500 8.500l8 5.800" stroke="#7a7a7a" stroke-width="1.300"/><circle cx="10.100" cy="5.400" r="4.300" fill="#e9e9e9" stroke="#9a9a9a" stroke-width="1.500"/></g>
<g transform="translate(838.0,78.0)"><path d="M14 20l9.500 -2.500v-8l-4 -1z" fill="#9a9a9a"/><path d="M1.500 1.500l15 5v15.500l-15 -5z" fill="#d6d6d6" stroke="#b4b4b4" stroke-width=".8"/><path d="M4 5l10.500 -3l6 2v13l-9 3l-7.500 -2.500z" fill="#9d9d9d" stroke="#8a8a8a" stroke-width=".8"/><path d="M5.500 7l9 2.500v8.500l-9 -2.500z" fill="#858585"/><path d="M10 8.500v4.500l-4.500 2M10 13l4.500 2" fill="none" stroke="#6a6a6a" stroke-width=".9"/><path d="M3 3.500l12 4v12.500l-12 -4z" fill="none" stroke="#c9c9c9" stroke-width="1.300"/></g>
<g transform="translate(874.0,78.0)"><path d="M0.500 6.500l11 -4.500l12.500 3l-10 5.500z" fill="#c4c4c4" opacity=".75" stroke="#aaa" stroke-width=".5"/><path d="M7.500 4l5 -3.200l6 1.500v17l-5 3.400l-6 -2z" fill="url(#gGrayBox2)" stroke="#7a7a7a" stroke-width=".7"/><path d="M7.500 4l6 1.800l5 -3.500M13.500 5.800v16.900" fill="none" stroke="#6a6a6a" stroke-width=".7"/><path d="M0.500 12.500l7 -2.800M18.500 9.500l5.500 1.500l-10 5.500l-13.500 -4z" fill="#c4c4c4" opacity=".7" stroke="#aaa" stroke-width=".5"/><path d="M0.500 18.500l7 -2.800M18.500 15.500l5.500 1.500l-10 5.500l-13.500 -4z" fill="#c4c4c4" opacity=".7" stroke="#aaa" stroke-width=".5"/></g>
<g transform="translate(922.5,78.0)"><path d="M15 6l8.500 3.500l-1 7l-6.500 1z" fill="url(#gTapeSh)"/><path d="M14.800 16.300l8.300 3l-.3 3.200l-1.300 -.5l.2 -1.200l-7.500 -2.700z" fill="#e6da52" stroke="#a89c38" stroke-width=".5"/><path d="M16.800 18.300l.4 -1M18.800 19l.4 -1M20.800 19.700l.4 -1" stroke="#8a7a18" stroke-width=".5"/><path d="M1.400 5q0 -3.300 3 -3.600l8.500 -.6q3.800 0 4.200 3l.6 11.700q0 3.500 -3 4l-1.500 .2q-1.500 0 -2.500 -.5l-7.500 -2.800q-1.300 -.8 -1.500 -2.500z" fill="url(#gTape)" stroke="#7e7e7e" stroke-width=".9"/><path d="M13.200 3q2 -.5 2.500 1.500l.6 11q0 2.300 -1.800 2.800l-1 -1.300z" fill="#c2c2c2" stroke="#f4f4f4" stroke-width=".6"/><ellipse cx="16" cy="12" rx="1.100" ry="2.300" fill="#f0ec20"/><path d="M2.500 5.500q0 -2 2 -2.300l6.500 -.5q2.500 0 2.700 2.200l.5 10q0 2.500 -2.200 2.800l-7.500 -2.300q-1.400 -.5 -1.500 -2z" fill="#cfcfcf" stroke="#f0f0f0" stroke-width=".7"/><circle cx="7.600" cy="10.200" r="5.400" fill="#050303"/><path d="M2.400 8.770a5.400 5.400 0 0 1 10.600 1.300z" fill="#f2ee1c"/></g>
<g transform="translate(958.7,78.0)"><g opacity=".95" transform="translate(4.500,2) scale(.8)"><path d="M15 6l8.500 3.500l-1 7l-6.500 1z" fill="url(#gTapeSh)"/><path d="M14.800 16.300l8.300 3l-.3 3.200l-1.300 -.5l.2 -1.200l-7.500 -2.700z" fill="#e6da52" stroke="#a89c38" stroke-width=".5"/><path d="M16.800 18.300l.4 -1M18.800 19l.4 -1M20.800 19.700l.4 -1" stroke="#8a7a18" stroke-width=".5"/><path d="M1.400 5q0 -3.300 3 -3.600l8.500 -.6q3.800 0 4.200 3l.6 11.700q0 3.500 -3 4l-1.500 .2q-1.500 0 -2.500 -.5l-7.500 -2.800q-1.300 -.8 -1.500 -2.500z" fill="url(#gTape)" stroke="#7e7e7e" stroke-width=".9"/><path d="M13.200 3q2 -.5 2.500 1.500l.6 11q0 2.300 -1.800 2.800l-1 -1.300z" fill="#c2c2c2" stroke="#f4f4f4" stroke-width=".6"/><ellipse cx="16" cy="12" rx="1.100" ry="2.300" fill="#f0ec20"/><path d="M2.500 5.500q0 -2 2 -2.300l6.500 -.5q2.500 0 2.700 2.200l.5 10q0 2.500 -2.200 2.800l-7.500 -2.300q-1.400 -.5 -1.500 -2z" fill="#cfcfcf" stroke="#f0f0f0" stroke-width=".7"/><circle cx="7.600" cy="10.200" r="5.400" fill="#050303"/><path d="M2.400 8.770a5.400 5.400 0 0 1 10.600 1.300z" fill="#f2ee1c"/></g><path d="M8 4q5.500 -3.500 10.500 -.3" fill="none" stroke="#1a56c8" stroke-width="1.700"/><path d="M20.800 6l-4.200 -.8l2.800 -3z" fill="#0c2a80"/><path d="M2.500 2.200l6.900 19.600l13.400 -17.300" fill="none" stroke="#1a0505" stroke-width="3.900" stroke-linejoin="miter" stroke-linecap="butt"/><path d="M9.400 21.800l13.400 -17.300" fill="none" stroke="#b8584a" stroke-width="2.400"/><path d="M2.500 2.200l6.900 19.600" fill="none" stroke="#e23a2c" stroke-width="2.400"/></g>
<g transform="translate(1006.0,78.0)"><path d="M15 6l8.500 3.500l-1 7l-6.500 1z" fill="url(#gTapeSh)"/><path d="M14.800 16.300l8.300 3l-.3 3.200l-1.300 -.5l.2 -1.200l-7.500 -2.700z" fill="#e6da52" stroke="#a89c38" stroke-width=".5"/><path d="M16.800 18.300l.4 -1M18.800 19l.4 -1M20.800 19.700l.4 -1" stroke="#8a7a18" stroke-width=".5"/><path d="M1.400 5q0 -3.300 3 -3.600l8.500 -.6q3.800 0 4.200 3l.6 11.700q0 3.500 -3 4l-1.500 .2q-1.500 0 -2.500 -.5l-7.500 -2.800q-1.300 -.8 -1.500 -2.500z" fill="url(#gTape)" stroke="#7e7e7e" stroke-width=".9"/><path d="M13.200 3q2 -.5 2.500 1.500l.6 11q0 2.300 -1.800 2.800l-1 -1.300z" fill="#c2c2c2" stroke="#f4f4f4" stroke-width=".6"/><ellipse cx="16" cy="12" rx="1.100" ry="2.300" fill="#f0ec20"/><path d="M2.500 5.500q0 -2 2 -2.300l6.500 -.5q2.500 0 2.700 2.200l.5 10q0 2.500 -2.200 2.800l-7.500 -2.300q-1.400 -.5 -1.500 -2z" fill="#cfcfcf" stroke="#f0f0f0" stroke-width=".7"/><circle cx="7.600" cy="10.200" r="5.400" fill="#050303"/><path d="M2.400 8.770a5.400 5.400 0 0 1 10.600 1.300z" fill="#f2ee1c"/><path d="M3.800 18.500l13.200 -13.600l3 3l-13.200 13.600z" fill="#e8da7c" stroke="#5a4a18" stroke-width=".7"/><path d="M17 4.900l2.300 -2.300l3 3l-2.300 2.300z" fill="#e8c8a4" stroke="#5a4a18" stroke-width=".5"/><path d="M19.300 2.600l3.700 -2.600l-.7 5.600z" fill="#0a0a0a"/><path d="M3.800 18.500l1.600 -1.600l3 3l-1.600 1.600q-1.800 1.300 -3.200 -.1q-1.200 -1.500 .2 -2.900z" fill="#c87878" stroke="#5a2a28" stroke-width=".7"/></g>
<g transform="translate(1042.0,78.0)"><g transform="translate(.8,0)"><path d="M15 6l8.500 3.500l-1 7l-6.500 1z" fill="url(#gTapeSh)"/><path d="M14.800 16.300l8.300 3l-.3 3.200l-1.300 -.5l.2 -1.200l-7.500 -2.700z" fill="#e6da52" stroke="#a89c38" stroke-width=".5"/><path d="M16.800 18.300l.4 -1M18.800 19l.4 -1M20.800 19.700l.4 -1" stroke="#8a7a18" stroke-width=".5"/><path d="M1.400 5q0 -3.300 3 -3.600l8.500 -.6q3.800 0 4.200 3l.6 11.700q0 3.500 -3 4l-1.500 .2q-1.500 0 -2.500 -.5l-7.500 -2.800q-1.300 -.8 -1.500 -2.500z" fill="url(#gTape)" stroke="#7e7e7e" stroke-width=".9"/><path d="M13.200 3q2 -.5 2.500 1.500l.6 11q0 2.300 -1.800 2.800l-1 -1.300z" fill="#c2c2c2" stroke="#f4f4f4" stroke-width=".6"/><ellipse cx="16" cy="12" rx="1.100" ry="2.300" fill="#f0ec20"/><path d="M2.500 5.500q0 -2 2 -2.300l6.500 -.5q2.500 0 2.700 2.200l.5 10q0 2.500 -2.200 2.800l-7.500 -2.300q-1.400 -.5 -1.500 -2z" fill="#cfcfcf" stroke="#f0f0f0" stroke-width=".7"/><circle cx="7.600" cy="10.200" r="5.400" fill="#050303"/><path d="M2.400 8.770a5.400 5.400 0 0 1 10.600 1.300z" fill="#f2ee1c"/></g><path d="M3.050 19.600v-14.950h18.300v15.500" fill="none" stroke="#2a7c22" stroke-width="2.800"/><path d="M1.600 12.500l7.700 -11.200l12.900 8.800l-8.800 11.200" fill="none" stroke="#c03434" stroke-width="2.500" opacity=".93"/></g>
<g transform="translate(1078.0,78.0)"><g transform="translate(.8,0)"><path d="M15 6l8.500 3.500l-1 7l-6.500 1z" fill="url(#gTapeSh)"/><path d="M14.800 16.300l8.300 3l-.3 3.200l-1.300 -.5l.2 -1.200l-7.500 -2.700z" fill="#e6da52" stroke="#a89c38" stroke-width=".5"/><path d="M16.800 18.300l.4 -1M18.800 19l.4 -1M20.800 19.700l.4 -1" stroke="#8a7a18" stroke-width=".5"/><path d="M1.400 5q0 -3.300 3 -3.600l8.500 -.6q3.800 0 4.200 3l.6 11.700q0 3.500 -3 4l-1.500 .2q-1.500 0 -2.500 -.5l-7.500 -2.800q-1.300 -.8 -1.500 -2.500z" fill="url(#gTape)" stroke="#7e7e7e" stroke-width=".9"/><path d="M13.200 3q2 -.5 2.500 1.500l.6 11q0 2.300 -1.800 2.800l-1 -1.300z" fill="#c2c2c2" stroke="#f4f4f4" stroke-width=".6"/><ellipse cx="16" cy="12" rx="1.100" ry="2.300" fill="#f0ec20"/><path d="M2.500 5.500q0 -2 2 -2.300l6.500 -.5q2.500 0 2.700 2.200l.5 10q0 2.500 -2.200 2.800l-7.500 -2.300q-1.400 -.5 -1.500 -2z" fill="#cfcfcf" stroke="#f0f0f0" stroke-width=".7"/><circle cx="7.600" cy="10.200" r="5.400" fill="#050303"/><path d="M2.400 8.770a5.400 5.400 0 0 1 10.600 1.300z" fill="#f2ee1c"/></g><path d="M1.600 12.500l7.700 -11.200l12.900 8.800l-8.800 11.200" fill="none" stroke="#c03434" stroke-width="2.500" opacity=".93"/></g>
<g transform="translate(1114.0,78.0)"><g transform="translate(.8,0)"><path d="M15 6l8.500 3.500l-1 7l-6.500 1z" fill="url(#gTapeSh)"/><path d="M14.800 16.300l8.300 3l-.3 3.200l-1.300 -.5l.2 -1.200l-7.500 -2.700z" fill="#e6da52" stroke="#a89c38" stroke-width=".5"/><path d="M16.800 18.300l.4 -1M18.800 19l.4 -1M20.800 19.700l.4 -1" stroke="#8a7a18" stroke-width=".5"/><path d="M1.400 5q0 -3.300 3 -3.600l8.500 -.6q3.800 0 4.200 3l.6 11.700q0 3.500 -3 4l-1.500 .2q-1.500 0 -2.500 -.5l-7.500 -2.800q-1.300 -.8 -1.500 -2.500z" fill="url(#gTape)" stroke="#7e7e7e" stroke-width=".9"/><path d="M13.200 3q2 -.5 2.500 1.500l.6 11q0 2.300 -1.800 2.800l-1 -1.300z" fill="#c2c2c2" stroke="#f4f4f4" stroke-width=".6"/><ellipse cx="16" cy="12" rx="1.100" ry="2.300" fill="#f0ec20"/><path d="M2.500 5.500q0 -2 2 -2.300l6.500 -.5q2.500 0 2.700 2.200l.5 10q0 2.500 -2.200 2.800l-7.500 -2.300q-1.400 -.5 -1.500 -2z" fill="#cfcfcf" stroke="#f0f0f0" stroke-width=".7"/><circle cx="7.600" cy="10.200" r="5.400" fill="#050303"/><path d="M2.400 8.770a5.400 5.400 0 0 1 10.600 1.300z" fill="#f2ee1c"/></g><path d="M3.050 19.600v-14.950h18.300v15.500" fill="none" stroke="#2a7c22" stroke-width="2.800"/></g>
<path d="M1209.800 47.600l3 2.700l-3 2.700M1214.300 47.600l3 2.700l-3 2.700" fill="none" stroke="#000" stroke-width="1.600"/>
<path d="M6.3 121.7h4.400M6.3 125.0h4.400M6.3 128.3h4.400" stroke="#c6c3be" stroke-width="1"/>
</svg>
<div class="abs" style="left:459px;top:38px;width:182px;height:23px;border:1px solid #aaa69f;border-radius:4px;box-sizing:border-box;background:linear-gradient(#ffffff,#ebeae8);"></div>
<svg class="abs" style="left:463px;top:40px" width="20" height="18" viewBox="0 0 20 18"><path d="M1.700 3.900l11.500 -2.600l4.900 1.400l-.4 11.800l-10.200 2.100l-5.200 -2.500z" fill="#0606f2" stroke="#000" stroke-width="1.100" stroke-linejoin="round"/><path d="M1.700 3.900l5.800 .8l10.600 -2M7.500 4.700v11.900" fill="none" stroke="#000" stroke-width="1"/></svg>
<div class="abs t" style="left:484px;top:41px;font-size:15px;">Part</div>
<svg class="abs" style="left:627px;top:43px" width="10" height="16" viewBox="0 0 10 16"><path d="M1.500 5.500l3 -3.500l3 3.500z" fill="#5a5a5a"/><path d="M1.500 11.500l3 3.500l3 -3.500z" fill="#5a5a5a"/></svg>

<div class="abs btn" style="left:15px;top:113px;width:83px;height:24px;"></div>
<svg class="abs" style="left:29px;top:115px" width="20" height="20" viewBox="0 0 20 20"><path d="M3.300 4.500l9.800 -2.500l-.6 11.500l-9.200 2.500z" fill="#7fd8d8" stroke="#1f9c9c" stroke-width="1.100"/><path d="M6 6.500l5 -1.400l-.8 6.600l-4.800 1.400z" fill="#f2f1f0" stroke="#1a2a2a" stroke-width="1.200"/><path d="M1.500 5l1.800 -.5M3.300 2.500v2M13.100 0.500v1.500M12.500 13.500v4M12.500 13.500l2.500 -.6M1.300 16.600l2 -.6M3.300 16v2" stroke="#1f9c9c" stroke-width=".8" fill="none"/></svg>
<div class="abs t" style="left:49px;top:116px;font-size:15.300px;">Auto</div>
<div class="abs btn" style="left:101px;top:113px;width:19px;height:24px;"></div>
<svg class="abs" style="left:102px;top:116px" width="18" height="18" viewBox="0 0 18 18"><path d="M1.800 12.200l6.500 -2.800" stroke="#1a8a8a" stroke-width="3.200" stroke-linecap="round"/><path d="M7.500 6.500l7.800 -2.200l-3 7.800l-1.500 -2.300l-2 .6z" fill="#c9f2ea" stroke="#1f7f7f" stroke-width="1" stroke-linejoin="round"/></svg>
<div class="abs btn" style="left:122.500px;top:113px;width:19px;height:24px;"></div>
<div class="abs" style="left:124px;top:117px;width:16px;height:16px;background:#000;"></div>
<div class="abs btn" style="left:144.500px;top:113px;width:19px;height:24px;"></div>
<div class="abs" style="left:146px;top:117px;width:16px;height:16px;background:#cacaca;"></div>
<div class="abs" style="left:166px;top:115px;width:47.500px;height:20.500px;border:1px solid #b3afa8;border-radius:4px;box-sizing:border-box;background:#fff;"></div>
<div class="abs" style="left:197px;top:116px;width:15.500px;height:18.500px;border-left:1px solid #d0cdc8;border-radius:0 3px 3px 0;box-sizing:border-box;background:linear-gradient(#fbfbfa,#e9e7e4);"></div>
<div class="abs t" style="left:171.500px;top:116px;font-size:15px;letter-spacing:-0.5px;">2px</div>
<svg class="abs" style="left:200.400px;top:117px" width="10" height="16" viewBox="0 0 10 16"><path d="M2.500 5.300l2.500 -2.800l2.500 2.800z" fill="#6a6a6a"/><path d="M2.500 11.800l2.500 2.800l2.500 -2.800z" fill="#6a6a6a"/></svg>
<div class="abs" style="left:216px;top:115px;width:62px;height:20.500px;border:1px solid #b3afa8;border-radius:4px;box-sizing:border-box;background:#fff;"></div>
<div class="abs" style="left:262px;top:116px;width:15px;height:18.500px;border-left:1px solid #d0cdc8;border-radius:0 3px 3px 0;box-sizing:border-box;background:linear-gradient(#fbfbfa,#e9e7e4);"></div>
<div class="abs t" style="left:222.500px;top:116px;font-size:15px;letter-spacing:-0.55px;">0,20</div>
<svg class="abs" style="left:265.600px;top:117px" width="10" height="16" viewBox="0 0 10 16"><path d="M2.500 5.300l2.500 -2.800l2.500 2.800z" fill="#6a6a6a"/><path d="M2.500 11.800l2.500 2.800l2.500 -2.800z" fill="#6a6a6a"/></svg>
<div class="abs btn" style="left:281.500px;top:113px;width:19px;height:24px;"></div>
<svg class="abs" style="left:283px;top:116px" width="18" height="20" viewBox="0 0 18 20"><rect x="3" y="2.200" width="4.300" height="3.400" fill="#e81818"/><rect x="3" y="5.600" width="4.300" height="3.400" fill="#f4e020"/><rect x="3" y="9" width="4.300" height="3.300" fill="#1a52d0"/><rect x="3" y="12.300" width="4.300" height="3.300" fill="#28c028"/><path d="M3 2.200v13.400" fill="none" stroke="#555" stroke-width="1"/><path d="M6 7.800h4v-2.600l5 4.500l-5 4.500v-2.600h-4z" fill="#2a6ad8" stroke="#0c2a80" stroke-width=".8" stroke-linejoin="round"/></svg>

<!--TB_END-->

<!-- COMBO VIEW -->
<div class="abs t" style="left:5px;top:144px;font-size:14.8px;">Combo View</div>
<svg class="abs" style="left:277px;top:146px" width="32" height="14" viewBox="0 0 32 14">
  <rect x="1.5" y="1.5" width="10" height="10" rx="1.8" fill="#f4f3f1" stroke="#4a4a48" stroke-width="1.1"/>
  <rect x="5.4" y="3.4" width="4.3" height="4.3" fill="none" stroke="#4a4a48" stroke-width="1"/>
  <rect x="3.4" y="5.4" width="4.3" height="4.3" fill="#f4f3f1" stroke="#4a4a48" stroke-width="1"/>
  <rect x="18.5" y="1.5" width="10" height="10" rx="1.8" fill="#f4f3f1" stroke="#4a4a48" stroke-width="1.1"/>
  <path d="M20.9 3.9l5.2 5.2M26.1 3.9l-5.2 5.2" stroke="#3a3a38" stroke-width="2"/>
</svg>
<!-- dock frame -->
<div class="abs" style="left:3px;top:194px;width:306px;height:477px;border:1px solid #c4c0ba;border-radius:0 3px 3px 3px;box-sizing:border-box;background:#f2f1f0;"></div>
<!-- tabs -->
<div class="abs" style="left:61px;top:168px;width:52px;height:27px;border:1px solid #c4c0ba;border-bottom:none;border-radius:4px 4px 0 0;box-sizing:border-box;background:linear-gradient(#efeeec,#e3e1de);"></div>
<div class="abs" style="left:3px;top:165px;width:59px;height:30px;border:1px solid #c4c0ba;border-bottom:none;border-radius:4px 4px 0 0;box-sizing:border-box;background:#f2f1f0;"></div>
<div class="abs t" style="left:12px;top:171px;font-size:14.8px;letter-spacing:0.05px;">Model</div>
<div class="abs t" style="left:70px;top:172px;font-size:14.8px;letter-spacing:-0.45px;">Tasks</div>
<!-- tree -->
<div class="abs frame" style="left:5px;top:195px;width:302px;height:216px;"></div>
<div class="abs hdr" style="left:6px;top:197px;width:179px;height:25px;"></div>
<div class="abs" style="left:185px;top:197px;width:121px;height:25px;background:linear-gradient(#f9f9f8,#f0efed);"></div>
<div class="abs t" style="left:10px;top:201px;letter-spacing:0.22px;">Labels &amp; Attributes</div>
<div class="abs t" style="left:9px;top:223px;letter-spacing:0.28px;">Application</div>
<div class="abs t" style="left:51px;top:242px;font-weight:bold;font-size:14.3px;letter-spacing:0.17px;">F2-T30-ejemplo-ini</div>
<div class="abs t" style="left:71px;top:261px;color:#a7a7a7;letter-spacing:-0.4px;">Cube</div>
<div class="abs" style="left:68px;top:279px;width:117px;height:19px;border:1px dotted #555;box-sizing:border-box;"></div>
<div class="abs t" style="left:71px;top:280px;">pieza</div>
<div class="abs t" style="left:71px;top:299px;letter-spacing:0.1px;">grupo-cotas-xy</div>
<div class="abs t" style="left:71px;top:318px;letter-spacing:0.05px;">grupo-cotas-z</div>
<div class="abs t" style="left:71px;top:337px;">Descripcion</div>
<svg class="abs" style="left:10px;top:240px" width="60" height="116" viewBox="0 0 60 116">
  <defs>
    <linearGradient id="gFold" x1="0" y1="0" x2="0" y2="1"><stop offset="0" stop-color="#f9a25a"/><stop offset="1" stop-color="#d9541e"/></linearGradient>
    <linearGradient id="gCubeG" x1="0" y1="0" x2="1" y2="1"><stop offset="0" stop-color="#c9c9c9"/><stop offset="1" stop-color="#7d7d7d"/></linearGradient>
  </defs>
  <!-- arrows -->
  <path d="M4.500 7.800h7.400l-3.700 5.600z" fill="#7a7a7a" stroke="#555" stroke-width=".8"/>
  <path d="M25.800 44.800l5.400 3.700-5.400 3.700z" fill="#8a8a8a" stroke="#555" stroke-width=".8"/>
  <path d="M25.800 63.800l5.400 3.700-5.400 3.700z" fill="#8a8a8a" stroke="#555" stroke-width=".8"/>
  <path d="M25.800 82.800l5.400 3.700-5.400 3.700z" fill="#8a8a8a" stroke="#555" stroke-width=".8"/>
  <path d="M25.800 101.800l5.400 3.700-5.400 3.700z" fill="#8a8a8a" stroke="#555" stroke-width=".8"/>
  <!-- doc icon -->
  <rect x="21" y="2.500" width="11.800" height="13.800" fill="#ececec" stroke="#d2d2d2" stroke-width=".8"/>
  <path d="M21 16.700h12" stroke="#b5b5b5" stroke-width=".8"/>
  <circle cx="28.600" cy="7.300" r="2.900" fill="#e02626"/>
  <path d="M23.500 9l4 -1.200l2.500 .8v5.200l-2.800 1.200l-3.700 -1z" fill="#2a49c0" stroke="#1a2f8c" stroke-width=".6"/>
  <path d="M30 8.600l2.400 .4v1.500h-2.400z" fill="#222"/>
  <!-- cube grey -->
  <ellipse cx="49" cy="35" rx="6.500" ry="1.300" fill="#b9b9b9" opacity=".7"/>
  <path d="M39.300 24.300l6.200 -1.800l6.800 .8v9.700l-6 1.800l-7 -1.200z" fill="url(#gCubeG)" stroke="#8d8d8d" stroke-width=".7"/>
  <path d="M39.300 24.300l7 1l6 -2M46.300 25.300v9.500" stroke="#a5a5a5" stroke-width=".7" fill="none"/>
  <!-- pieza icon -->
  <path d="M39.800 47.200l7.200 -3.800l7 2.800v3.200l-7.600 4.300l-6.600 -3.500z" fill="#0a3fc0" stroke="#0a2a90" stroke-width=".7"/>
  <path d="M39.800 47.200l7.200 -3.800l7 2.800l-7.600 4z" fill="#1a6af0"/>
  <path d="M44.200 46.600l3.200 -1.800l3.200 1.300l-3.300 1.800z" fill="#e81818"/>
  <!-- folders -->
  <g id="fold1">
    <path d="M39.500 61.500h5.500l1.500 1.500h8v11h-15z" fill="#e8e6e2" stroke="#a09c95" stroke-width="0.9"/>
    <rect x="40.500" y="64.500" width="14" height="9.500" fill="url(#gFold)" stroke="#c24a18" stroke-width="0.8"/>
  </g>
  <use href="#fold1" y="19"/>
  <use href="#fold1" y="38"/>
</svg>
<!-- splitter grip -->
<svg class="abs" style="left:151px;top:412px" width="12" height="6" viewBox="0 0 12 6"><path d="M2.500 1v4M5.500 1v4M8.500 1v4" stroke="#c8c5c0" stroke-width="1"/></svg>
<!-- property view -->
<div class="abs frame" style="left:6px;top:418px;width:300px;height:222px;border-radius:3px;box-shadow:inset 0 0 0 1px #f2f1ef, inset 0 0 0 2px #cfccc7;"></div>
<div class="abs hdr" style="left:7px;top:420px;width:101px;height:25px;"></div>
<div class="abs hdr" style="left:108px;top:420px;width:196px;height:25px;"></div>
<div class="abs t" style="left:12px;top:424px;letter-spacing:0.44px;">Property</div>
<div class="abs t" style="left:112px;top:424px;letter-spacing:0.18px;">Value</div>
<!-- bottom tabs -->
<svg class="abs" style="left:3px;top:638px" width="110" height="34" viewBox="0 0 110 34">
  <path d="M53.500 4.500l9 23.500q1 2.500 4 2.500h19q3 0 4-2.500l7.500-23.500" fill="#eceae7" stroke="#5a5a58" stroke-width="1"/>
  <path d="M3 2.500l9.500 27q1 2.500 4 2.500h22.500q3 0 4-2.500l9-27" fill="#f4f3f2" stroke="#5a5a58" stroke-width="1"/>
</svg>
<div class="abs t" style="left:13.800px;top:646px;letter-spacing:0px;">View</div>
<div class="abs t" style="left:63px;top:645px;letter-spacing:-0.2px;">Data</div>
<!-- MDI tab -->
<div class="abs" style="left:315px;top:639px;width:207px;height:32px;border:1px solid #c9c6c0;border-top:none;border-radius:0 0 4px 4px;box-sizing:border-box;background:linear-gradient(#f7f6f5,#fdfdfd);"></div>
<div class="abs t" style="left:346.500px;top:647px;letter-spacing:-0.19px;">F2-T30-ejemplo-ini : 1</div>
<svg class="abs" style="left:320px;top:646px" width="20" height="20" viewBox="0 0 20 20">
  <path d="M3 2.500h7.500v4h-4.500v9h-3z" fill="#e0401c"/>
  <circle cx="11" cy="11.500" r="4.200" fill="#1b2f8f"/>
  <g stroke="#1b2f8f" stroke-width="2"><path d="M11 5.500v12M5 11.500h12M6.800 7.300l8.400 8.400M15.200 7.300l-8.400 8.400"/></g>
  <circle cx="11" cy="11.500" r="1.800" fill="#f4f3f2"/>
</svg>
<svg class="abs" style="left:497px;top:649px" width="14" height="14" viewBox="0 0 14 14"><path d="M2.500 2.500l9 9M11.500 2.500l-9 9" stroke="#4a4a48" stroke-width="3.200"/></svg>
<!-- side splitter grip -->
<svg class="abs" style="left:309px;top:401px" width="6" height="12" viewBox="0 0 6 12"><path d="M1 2.500h4M1 5.500h4M1 8.500h4" stroke="#c8c5c0" stroke-width="1"/></svg>

<!-- 3D VIEW -->
<div class="abs" id="view3d" style="left:315px;top:140px;width:906px;height:499px;background:linear-gradient(#333367,#9696ab);"></div>
<svg class="abs" style="left:315px;top:140px" width="906" height="499" viewBox="315 140 906 499" font-family="'Liberation Serif','DejaVu Serif',serif" fill="#000">
  <defs>
    <path id="arwS" d="M0 0l-9 -2.200v4.400z"/>
  </defs>
  <g stroke="#0a0a0a" stroke-width="1.700" stroke-linejoin="round">
    <!-- left face -->
    <polygon points="653.100,262.800 693.700,315 693.700,335 712,357.800 714.100,545.300 654.600,471.400" fill="#525252"/>
    <!-- top face -->
    <polygon points="653.100,262.800 785.200,221.800 843.900,296.200 747.500,325.300 730.400,303.100 693.700,315" fill="#8c8c8c"/>
    <!-- front face -->
    <polygon points="712,357.800 747.500,345.800 747.500,325.300 843.900,296.200 845.800,504.200 714.100,545.300" fill="#9b9b9b"/>
    <!-- notch back wall -->
    <polygon points="693.700,315 730.400,303.100 730.400,324.400 693.700,335" fill="#9a9a9a"/>
    <!-- notch right wall -->
    <polygon points="730.400,303.100 747.500,325.300 747.500,345.800 730.400,324.400" fill="#555555"/>
    <!-- notch floor -->
    <polygon points="693.700,335 730.400,324.400 747.500,345.800 712,357.800" fill="#8a8a8a"/>
  </g>
  <!-- dimension lines -->
  <g stroke="#000" stroke-width="1.100" fill="none">
    <path d="M843.900 296.200L891.100 281.500M845.800 504.200L893.300 489.600M891.100 281.500L893.300 489.600"/>
    <path d="M654.600 471.400L595.200 489.200M714.100 545.300L653.300 564.400M595.700 489.700L653.300 563.900"/>
    <path d="M714.100 545.300L742.900 582.700M845.800 504.200L874.600 541.600M742.900 582.700L874.600 541.600"/>
    <path d="M712 357.800L712 387.700M747.500 345.800L748.400 377.400M712.300 387.500L748.400 377.200" stroke-width="1"/>
    <path d="M747.500 345.800L779.100 337.300M779.100 317.600L779.100 337.300" stroke-width="1"/>
    <path d="M730.400 303.100L751.800 296.600L768.900 318.500" stroke-width="1"/>
  </g>
  <!-- arrows -->
  <path d="M0 0l-15.500 -3.300v6.600z" transform="translate(891.100,281.500) rotate(-90.600)"/>
  <path d="M0 0l-15.500 -3.300v6.600z" transform="translate(893.300,489.600) rotate(89.400)"/>
  <path d="M0 0l-11.800 -4.100v8.200z" transform="translate(595.700,489.700) rotate(-127.800)"/>
  <path d="M0 0l-11.800 -4.100v8.200z" transform="translate(653.300,563.900) rotate(52.200)"/>
  <path d="M0 0l-16.400 -2.900v5.800z" transform="translate(742.900,582.700) rotate(162.700)"/>
  <path d="M0 0l-16.400 -2.900v5.800z" transform="translate(874.600,541.600) rotate(-17.300)"/>
  <use href="#arwS" transform="translate(712.300,387.500) rotate(164)"/>
  <use href="#arwS" transform="translate(748.400,377.200) rotate(-16)"/>
  <use href="#arwS" transform="translate(779.100,317.600) rotate(-90) scale(.6)"/>
  <use href="#arwS" transform="translate(779.100,337.300) rotate(90) scale(.6)"/>
  <use href="#arwS" transform="translate(751.800,296.600) rotate(-128) scale(.6)"/>
  <use href="#arwS" transform="translate(768.900,318.500) rotate(52) scale(.6)"/>
  <!-- dimension texts -->
  <text transform="matrix(0.0096,0.9100,-1.0982,0.3415,904.20,349.50)" font-size="25" stroke="#000" stroke-width=".3">20 mm</text>
  <text transform="matrix(0.5302,0.6834,-1.0528,0.3808,620.70,502.50)" font-size="22" stroke="#000" stroke-width=".35">10 mm</text>
  <text transform="matrix(0.9741,-0.3029,0.4524,0.6318,768.60,565.00)" font-size="24" stroke="#000" stroke-width=".35">11 mm</text>
  <text transform="translate(729.600,373.200) rotate(-16)" font-size="12" text-anchor="middle" y="4">3</text>
  <text transform="translate(789,323.600) rotate(90)" font-size="11" text-anchor="middle" y="3.500">2</text>
  <text transform="translate(771.500,304.800) rotate(60)" font-size="9" text-anchor="middle" y="3">3</text>
  <!-- balloon -->
  <path d="M762.500 198.200L703.700 215.800L684.900 268.700" fill="none" stroke="#000" stroke-width="2"/>
  <ellipse cx="782.500" cy="191.900" rx="20.800" ry="13" fill="none" stroke="#000" stroke-width="1.700"/>
  <text transform="translate(781.700,191.800) rotate(-46)" font-size="20" text-anchor="middle" y="6.800">1</text>
  <!-- axis cross -->
  <g fill="none" stroke-linecap="round">
    <path d="M1196.400 614.200L1190.900 607.600" stroke="#1f8a2a" stroke-width="2.400"/>
    <path d="M1196.400 614.200L1209.700 610.400" stroke="#a02020" stroke-width="1.700"/>
    <path d="M1196.400 614.200L1196.400 599" stroke="#22228e" stroke-width="2"/>
  </g>
  <path d="M1196.400 598l-2.300 6.500h4.600z" fill="#22228e"/>
  <text x="1212.500" y="610.800" font-family="'Liberation Sans',sans-serif" font-size="12.500" fill="#000">x</text>
</svg>


<!-- STATUS -->
<div class="abs" style="left:3px;top:672px;width:1218px;height:1px;background:#d6d3cf;"></div>
<div class="abs" style="left:3px;top:673px;width:1218px;height:1px;background:#fafaf9;"></div>
<svg class="abs" style="left:1208px;top:688px" width="13" height="13" viewBox="0 0 13 13"><rect x="10" y="1" width="1" height="1" fill="#cfcdca"/><rect x="11" y="2" width="1" height="1" fill="#ffffff"/><rect x="7" y="4" width="1" height="1" fill="#cfcdca"/><rect x="8" y="5" width="1" height="1" fill="#ffffff"/><rect x="10" y="4" width="1" height="1" fill="#cfcdca"/><rect x="11" y="5" width="1" height="1" fill="#ffffff"/><rect x="4" y="7" width="1" height="1" fill="#cfcdca"/><rect x="5" y="8" width="1" height="1" fill="#ffffff"/><rect x="7" y="7" width="1" height="1" fill="#cfcdca"/><rect x="8" y="8" width="1" height="1" fill="#ffffff"/><rect x="10" y="7" width="1" height="1" fill="#cfcdca"/><rect x="11" y="8" width="1" height="1" fill="#ffffff"/><rect x="1" y="10" width="1" height="1" fill="#cfcdca"/><rect x="2" y="11" width="1" height="1" fill="#ffffff"/><rect x="4" y="10" width="1" height="1" fill="#cfcdca"/><rect x="5" y="11" width="1" height="1" fill="#ffffff"/><rect x="7" y="10" width="1" height="1" fill="#cfcdca"/><rect x="8" y="11" width="1" height="1" fill="#ffffff"/><rect x="10" y="10" width="1" height="1" fill="#cfcdca"/><rect x="11" y="11" width="1" height="1" fill="#ffffff"/></svg>
<div class="abs t" style="left:1077px;top:679px;font-size:14.5px;">67.87 x 37.38 mm</div>
</body>
</html>
